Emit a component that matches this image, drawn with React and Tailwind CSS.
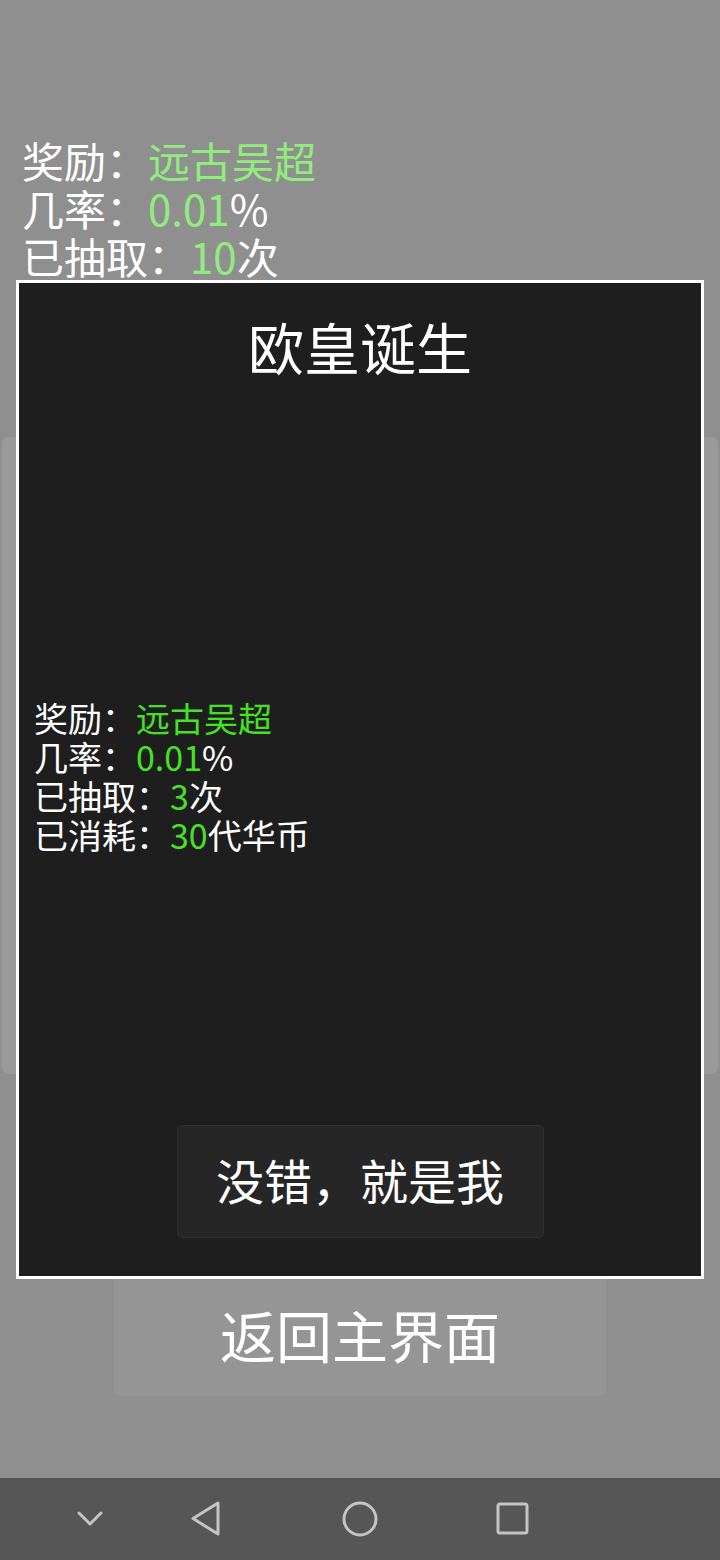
import React from 'react';

const font = { fontFamily: '"Noto Sans CJK SC", "Noto Sans", sans-serif' };

const InfoLine = ({ label, value, suffix, green }) => (
  <div>
    {label}
    <span className={green}>{value}</span>
    {suffix}
  </div>
);

const NavBar = () => (
  <div className="mt-auto h-[82px] bg-[#565656] flex items-center">
    <svg width="720" height="82" viewBox="0 0 720 82" fill="none" stroke="#c4c4c4" strokeWidth="3" strokeLinecap="round" strokeLinejoin="round">
      <path d="M79 35 L90 46 L101 35" />
      <path d="M218 25 L218 56 L193 40.5 Z" />
      <circle cx="360" cy="41" r="16" />
      <rect x="498" y="26" width="29" height="29" rx="2" />
    </svg>
  </div>
);

const Dialog = () => (
  <div className="absolute left-[16px] top-[280px] w-[688px] h-[999px] border-[3px] border-white bg-[#1e1e1e] flex flex-col">
    <div className="pt-[31px] text-center text-white text-[56px] leading-[64px]">欧皇诞生</div>
    <div className="mt-[320px] pl-[15px] text-white text-[34px] leading-[39px]">
      <InfoLine label="奖励：" value="远古吴超" green="text-[#46e024]" />
      <InfoLine label="几率：" value="0.01" suffix="%" green="text-[#46e024]" />
      <InfoLine label="已抽取：" value="3" suffix="次" green="text-[#46e024]" />
      <InfoLine label="已消耗：" value="30" suffix="代华币" green="text-[#46e024]" />
    </div>
    <div className="mt-auto mb-[38px] flex justify-center">
      <button className="w-[367px] h-[113px] pb-[6px] rounded-[5px] bg-[#262626] border border-[#303030] text-white text-[48px] leading-none">
        没错，就是我
      </button>
    </div>
  </div>
);

export default function App() {
  return (
    <div className="relative w-[720px] h-[1560px] bg-[#8f8f8f] flex flex-col overflow-hidden" style={font}>
      <div className="pt-[136px] pl-[22px] text-white text-[42px] leading-[48px]">
        <InfoLine label="奖励：" value="远古吴超" green="text-[#8fec7d]" />
        <InfoLine label="几率：" value="0.01" suffix="%" green="text-[#8fec7d]" />
        <InfoLine label="已抽取：" value="10" suffix="次" green="text-[#8fec7d]" />
      </div>
      <div className="mt-[157px] mx-[2px] h-[637px] rounded-md bg-[#9a9a9a]" />
      <div className="mt-[180px] flex justify-center">
        <div className="w-[492px] h-[142px] rounded-md bg-[#959595] flex items-center justify-center pt-[17px] text-white text-[56px] leading-none">
          返回主界面
        </div>
      </div>
      <NavBar />
      <Dialog />
    </div>
  );
}
